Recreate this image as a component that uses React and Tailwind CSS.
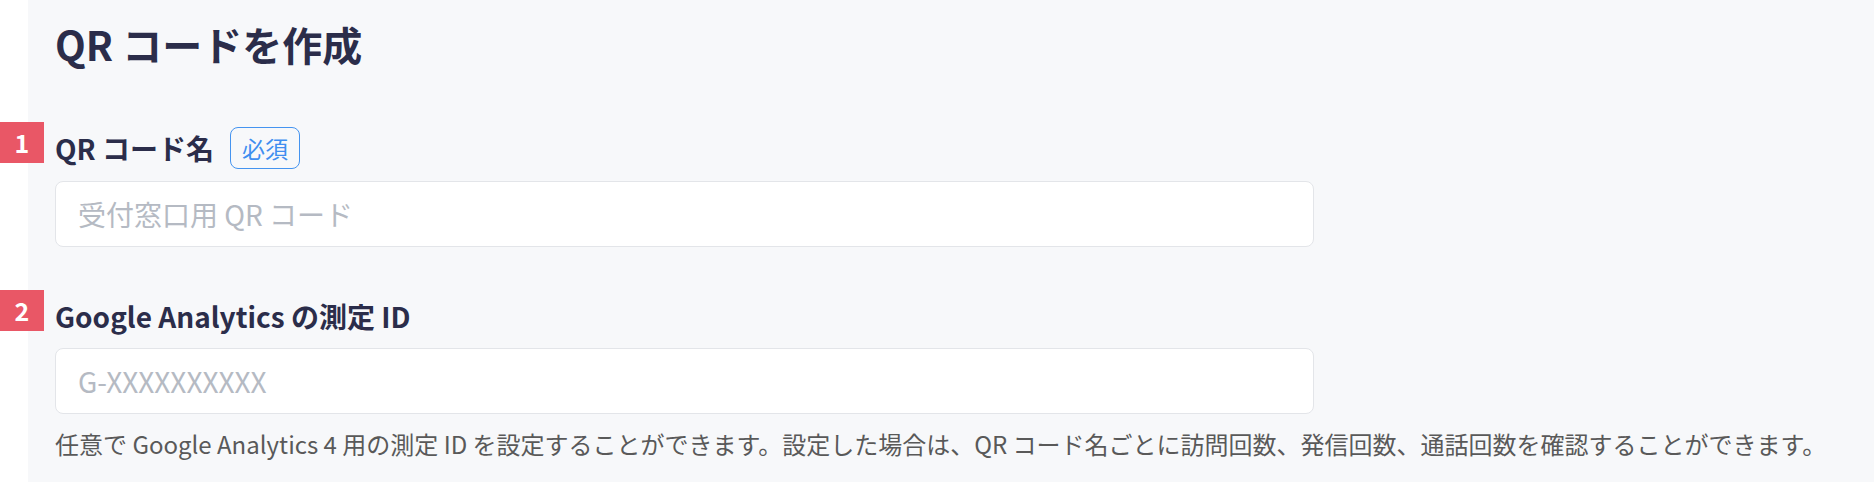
import React from 'react';

const font = { fontFamily: '"Noto Sans CJK JP", "Noto Sans", sans-serif' };

const StepBadge = ({ n }) => (
  <span className="absolute left-[-55px] top-[-5px] w-[44px] h-[41px] bg-[#e95766] text-white font-bold text-[25px] flex items-center justify-center">
    {n}
  </span>
);

const App = () => {
  return (
    <div className="flex min-h-screen bg-white" style={font}>
      <div className="w-[28px] shrink-0 bg-white" />
      <main className="flex-1 bg-[#f7f8fa] pl-[27px] pt-[22px] pb-[20px]">
        <h1 className="h-[44px] leading-[44px] text-[40px] font-bold text-[#2b2d4a]">
          QR コードを作成
        </h1>

        <div className="relative mt-[61px] h-[42px] flex items-center">
          <StepBadge n="1" />
          <span className="text-[28px] leading-[42px] font-bold text-[#2b2d4a]">QR コード名</span>
          <span className="ml-[16px] h-[42px] w-[70px] rounded-[8px] border-[1.5px] border-[#4594f0] text-[#3f8ef0] text-[23px] flex items-center justify-center">
            必須
          </span>
        </div>
        <input
          type="text"
          placeholder="受付窓口用 QR コード"
          className="mt-[12px] block w-[1259px] h-[66px] rounded-[8px] border border-[#e3e5e9] bg-white px-[22px] text-[28px] text-[#2b2d4a] placeholder:text-[#b5bac3] outline-none"
        />

        <div className="relative mt-[48px] h-[42px] flex items-center">
          <StepBadge n="2" />
          <span className="text-[28px] leading-[42px] font-bold text-[#2b2d4a]">Google Analytics の測定 ID</span>
        </div>
        <input
          type="text"
          placeholder="G-XXXXXXXXXX"
          className="mt-[11px] block w-[1259px] h-[66px] rounded-[8px] border border-[#e3e5e9] bg-white px-[22px] text-[28px] text-[#2b2d4a] placeholder:text-[#b5bac3] outline-none"
        />
        <p className="mt-[15px] h-[30px] leading-[30px] text-[24px] text-[#595959] whitespace-nowrap">
          任意で Google Analytics 4 用の測定 ID を設定することができます。設定した場合は、QR コード名ごとに訪問回数、発信回数、通話回数を確認することができます。
        </p>
      </main>
    </div>
  );
};

export default App;
